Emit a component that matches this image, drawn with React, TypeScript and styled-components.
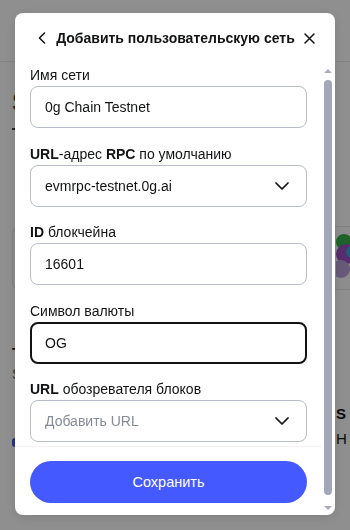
import React from "react";
import styled, { createGlobalStyle } from "styled-components";

const GlobalStyle = createGlobalStyle`
  html, body { margin: 0; padding: 0; }
  body {
    width: 350px;
    height: 530px;
    overflow: hidden;
    font-family: "Liberation Sans", Arial, sans-serif;
    background: #ffffff;
  }
  * { box-sizing: border-box; }
`;

/* ---------- background page (dimmed behind the dialog) ---------- */
const Page = styled.div`
  width: 350px;
  height: 530px;
  overflow: hidden;
  background: #ffffff;
  display: flex;
  flex-direction: column;
`;
const PageHeader = styled.div`
  height: 62px;
  flex: none;
  background: #ffffff;
  border-bottom: 1px solid #ececec;
`;
const PageMain = styled.div`
  display: flex;
  flex-direction: column;
  padding: 26px 0 0 12px;
`;
const BigHeading = styled.div`
  font-size: 26px;
  line-height: 28px;
  font-weight: 700;
  color: #6b4a2a;
`;
const Dash = styled.div`
  margin-top: 12px;
  width: 5px;
  height: 2px;
  background: #444;
`;
const Card = styled.div`
  margin-top: 96px;
  height: 64px;
  border: 1px solid #e6e6e6;
  border-right: none;
  border-radius: 8px 0 0 8px;
  background: #fbfbfb;
  display: flex;
  justify-content: flex-end;
  align-items: center;
`;
const Coins = styled.div`
  width: 14px;
  height: 56px;
  position: relative;
  overflow: hidden;
`;
const Coin = styled.span<{ $c: string; $x: number; $y: number; $s: number }>`
  position: absolute;
  left: ${(p) => p.$x}px;
  top: ${(p) => p.$y}px;
  width: ${(p) => p.$s}px;
  height: ${(p) => p.$s}px;
  border-radius: 50%;
  background: ${(p) => p.$c};
`;
const SectionTitle = styled.div`
  margin-top: 55px;
  font-size: 16px;
  line-height: 20px;
  font-weight: 700;
  color: #141414;
`;
const SectionSub = styled.div`
  font-size: 14px;
  line-height: 18px;
  color: #666;
`;
const TokenRow = styled.div`
  margin-top: 18px;
  display: flex;
  justify-content: space-between;
  align-items: flex-end;
`;
const BlueDot = styled.span`
  width: 5px;
  height: 9px;
  border-radius: 3px 0 0 3px;
  background: #4459ff;
  margin-bottom: 4px;
`;
const TokenCol = styled.div`
  width: 14px;
  display: flex;
  flex-direction: column;
  font-size: 15px;
  line-height: 25px;
  color: #141414;
`;

/* ---------- dialog ---------- */
const Overlay = styled.div`
  position: fixed;
  inset: 0;
  background: rgba(0, 0, 0, 0.44);
  display: flex;
  justify-content: center;
  align-items: flex-start;
  padding-top: 13px;
`;
const Dialog = styled.div`
  width: 320px;
  height: 502px;
  background: #ffffff;
  border-radius: 8px;
  display: flex;
  flex-direction: column;
  overflow: hidden;
  box-shadow: 0 2px 12px rgba(0, 0, 0, 0.12);
`;
const Header = styled.div`
  height: 50px;
  flex: none;
  display: flex;
  align-items: center;
  justify-content: space-between;
  padding: 0 20px 0 21px;
`;
const IconButton = styled.button`
  width: 11px;
  height: 14px;
  padding: 0;
  border: none;
  background: none;
  display: flex;
  align-items: center;
  justify-content: center;
  color: #121314;
`;
const Title = styled.h2`
  margin: 0;
  font-size: 14px;
  line-height: 22px;
  font-weight: 700;
  color: #121314;
`;
const Body = styled.div`
  flex: 1;
  min-height: 0;
  display: flex;
`;
const ScrollArea = styled.div`
  flex: 1;
  min-width: 0;
  overflow: hidden;
`;
const Scrollbar = styled.div`
  width: 14px;
  flex: none;
  display: flex;
  flex-direction: column;
  align-items: center;
  padding: 6px 0 5px;
  gap: 5px;
`;
const Arrow = styled.span<{ $down?: boolean }>`
  width: 0;
  height: 0;
  border-left: 4px solid transparent;
  border-right: 4px solid transparent;
  ${(p) =>
    p.$down
      ? "border-top: 4px solid #a9adb9;"
      : "border-bottom: 4px solid #a9adb9;"}
`;
const Thumb = styled.span`
  flex: 1;
  width: 8px;
  margin: 2px 0 6px;
  border-radius: 4px;
  background: #a3a8b8;
`;
const Form = styled.div`
  display: flex;
  flex-direction: column;
  gap: 14.5px;
  padding: 1px 14px 0 15px;
`;
const Field = styled.div`
  display: flex;
  flex-direction: column;
`;
const Label = styled.div`
  font-size: 14px;
  line-height: 22px;
  color: #121314;
  b { font-weight: 700; }
`;
const InputBox = styled.div<{ $focused?: boolean; $placeholder?: boolean }>`
  height: 42px;
  border: ${(p) => (p.$focused ? "2px solid #121314" : "1px solid #b9bdc9")};
  border-radius: 8px;
  padding: 0 ${(p) => (p.$focused ? 16 : 17)}px 0 ${(p) => (p.$focused ? 13 : 14)}px;
  display: flex;
  align-items: center;
  justify-content: space-between;
  font-size: 14px;
  color: ${(p) => (p.$placeholder ? "#868b99" : "#121314")};
`;
const Footer = styled.div`
  margin-top: 4px;
  border-top: 1px solid #f1f1f3;
  padding: 14px 14px 22px 15px;
`;
const SaveButton = styled.button`
  width: 100%;
  height: 42px;
  border: none;
  border-radius: 21px;
  background: #4459ff;
  color: #ffffff;
  font-family: "Liberation Sans", Arial, sans-serif;
  font-size: 14.5px;
`;

const ChevronDown = () => (
  <svg width="14" height="8" viewBox="0 0 14 8" fill="none">
    <path d="M1 1l6 6 6-6" stroke="#121314" strokeWidth="1.7" strokeLinecap="round" strokeLinejoin="round" />
  </svg>
);
const ChevronLeft = () => (
  <svg width="8" height="12" viewBox="0 0 8 12" fill="none">
    <path d="M6.5 1L1.5 6l5 5" stroke="#121314" strokeWidth="1.6" strokeLinecap="round" strokeLinejoin="round" />
  </svg>
);
const CloseIcon = () => (
  <svg width="11" height="11" viewBox="0 0 11 11" fill="none">
    <path d="M1 1l9 9M10 1l-9 9" stroke="#121314" strokeWidth="1.5" strokeLinecap="round" />
  </svg>
);

export default function App() {
  return (
    <>
      <GlobalStyle />
      <Page>
        <PageHeader />
        <PageMain>
          <BigHeading>S</BigHeading>
          <Dash />
          <Card>
            <Coins>
              <Coin $c="#35b34a" $x={0} $y={4} $s={16} />
              <Coin $c="#9a4fc4" $x={0} $y={14} $s={20} />
              <Coin $c="#3aa0e0" $x={10} $y={16} $s={12} />
              <Coin $c="#b8a0d8" $x={-4} $y={30} $s={18} />
            </Coins>
          </Card>
          <SectionTitle>T</SectionTitle>
          <SectionSub>S</SectionSub>
          <TokenRow>
            <BlueDot />
            <TokenCol>
              <b>S</b>
              <span>H</span>
            </TokenCol>
          </TokenRow>
        </PageMain>
      </Page>
      <Overlay>
        <Dialog>
          <Header>
            <IconButton aria-label="Назад">
              <ChevronLeft />
            </IconButton>
            <Title>Добавить пользовательскую сеть</Title>
            <IconButton aria-label="Закрыть">
              <CloseIcon />
            </IconButton>
          </Header>
          <Body>
            <ScrollArea>
              <Form>
                <Field>
                  <Label>Имя сети</Label>
                  <InputBox>0g Chain Testnet</InputBox>
                </Field>
                <Field>
                  <Label>
                    <b>URL</b>-адрес <b>RPC</b> по умолчанию
                  </Label>
                  <InputBox>
                    <span>evmrpc-testnet.0g.ai</span>
                    <ChevronDown />
                  </InputBox>
                </Field>
                <Field>
                  <Label>
                    <b>ID</b> блокчейна
                  </Label>
                  <InputBox>16601</InputBox>
                </Field>
                <Field>
                  <Label>Символ валюты</Label>
                  <InputBox $focused>OG</InputBox>
                </Field>
                <Field>
                  <Label>
                    <b>URL</b> обозревателя блоков
                  </Label>
                  <InputBox $placeholder>
                    <span>Добавить URL</span>
                    <ChevronDown />
                  </InputBox>
                </Field>
              </Form>
              <Footer>
                <SaveButton>Сохранить</SaveButton>
              </Footer>
            </ScrollArea>
            <Scrollbar aria-hidden>
              <Arrow />
              <Thumb />
              <Arrow $down />
            </Scrollbar>
          </Body>
        </Dialog>
      </Overlay>
    </>
  );
}
